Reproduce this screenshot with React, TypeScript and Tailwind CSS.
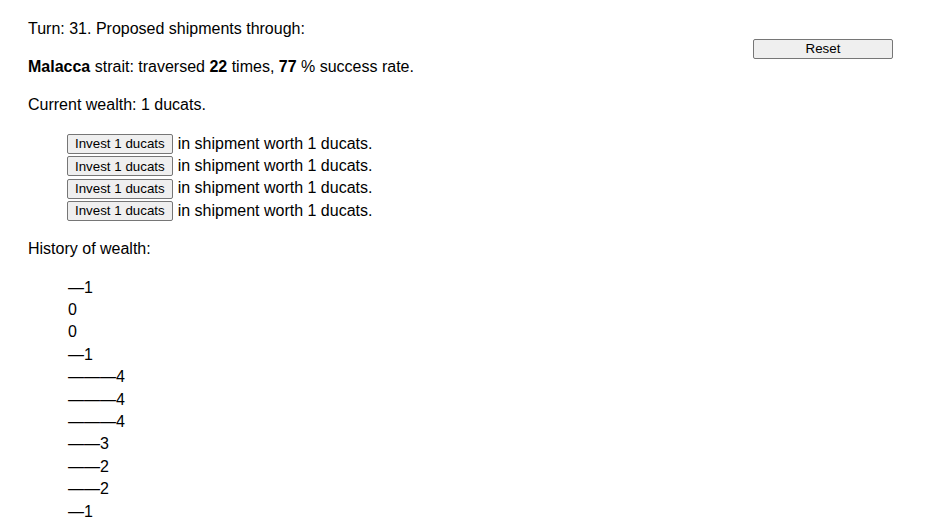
export default function App() {
  const shipments = [1, 1, 1, 1];
  const history = ["—1", "0", "0", "—1", "———4", "———4", "———4", "——3", "——2", "——2", "—1"];

  return (
    <div className="min-h-screen bg-white text-black text-[16px] leading-[1.4] font-['Liberation_Sans',Arial,sans-serif] px-[28px] pt-[17.5px]">
      <button className="float-right mt-[21.5px] mr-[7px] w-[140px] h-[20px] bg-[#efefef] border border-[#767676] rounded-[2px] text-[13.33px] leading-none text-black">
        Reset
      </button>

      <p>Turn: 31. Proposed shipments through:</p>

      <p className="mt-4">
        <b>Malacca</b> strait: traversed <b>22</b> times, <b>77</b> % success rate.
      </p>

      <p className="mt-4">Current wealth: 1 ducats.</p>

      <div className="mt-4 pl-[39px]">
        {shipments.map((v, i) => (
          <div key={i} className="flex items-center h-[22.4px]">
            <button className="h-[20px] px-[7px] bg-[#efefef] border border-[#767676] rounded-[2px] text-[13.33px] leading-none text-black">
              Invest {v} ducats
            </button>
            <span className="ml-[5px]">in shipment worth {v} ducats.</span>
          </div>
        ))}
      </div>

      <p className="mt-4">History of wealth:</p>

      <div className="mt-4 pl-[40px]">
        {history.map((h, i) => (
          <div key={i}>{h}</div>
        ))}
      </div>
    </div>
  );
}
